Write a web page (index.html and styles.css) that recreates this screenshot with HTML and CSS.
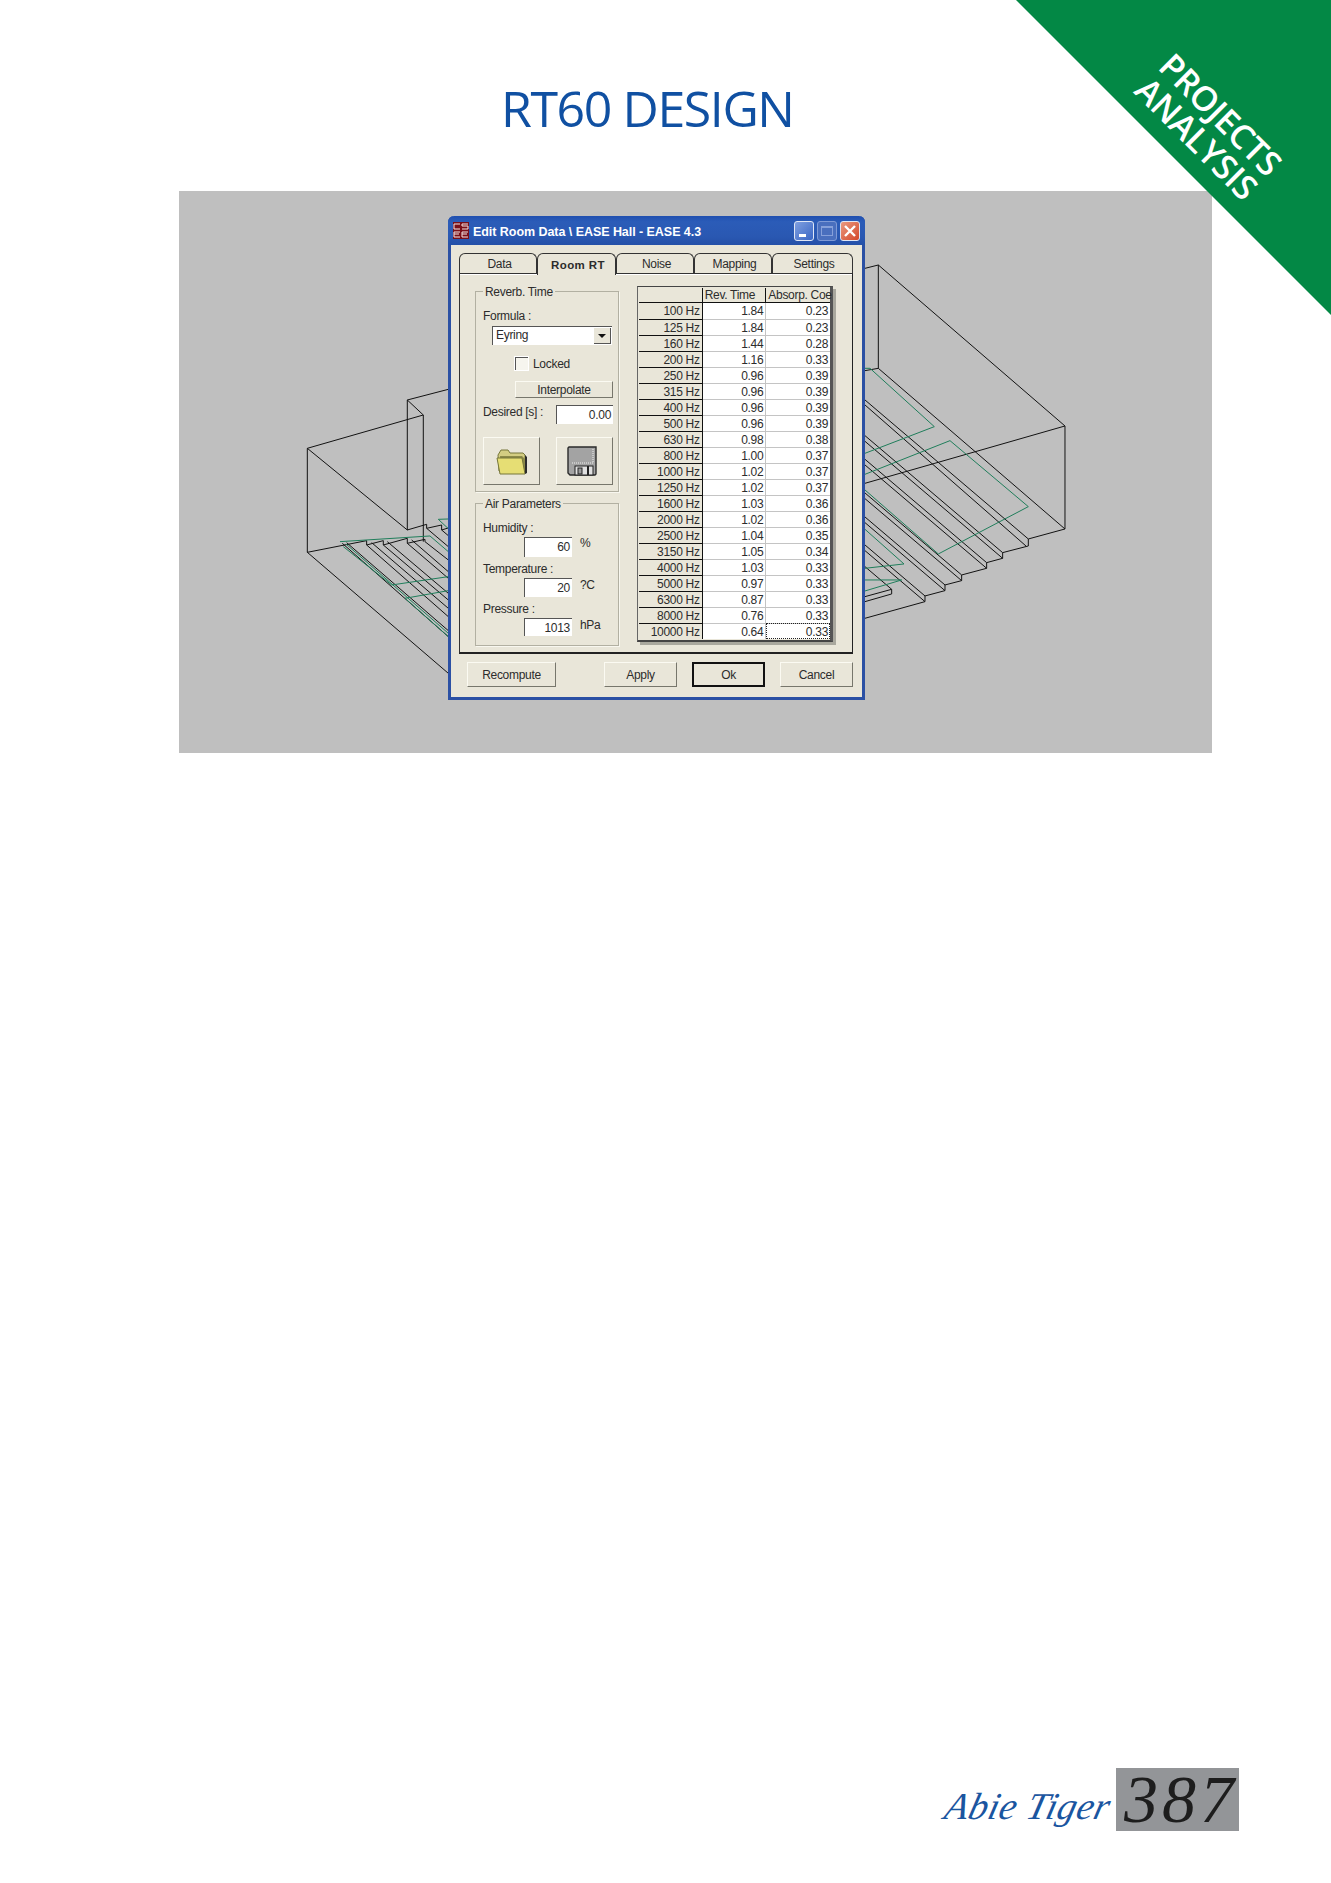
FILE: index.html
```html
<!DOCTYPE html>
<html lang="en">
<head>
  <meta charset="UTF-8" />
  <title>RT60 Design</title>
  <link rel="stylesheet" href="styles.css">
</head>
<body>
  <div class="page">
    <div class="corner">
      <div class="corner-text">PROJECTS<br>ANALYSIS</div>
    </div>

    <h1 class="title">RT60 DESIGN</h1>

    <div class="figure">
      <!-- wireframe of the hall, drawn in page coordinates -->
      <svg class="wire" viewBox="179 191 1033 562" width="1033" height="562">
        <!-- left side, points read at 3x from (170,370) -->
        <g transform="translate(170 370) scale(0.3333)">
          <path class="blk" d="M412 235V547M412 235L760 135V515M712 90L835 58M712 90V480M712 90L760 135M412 235L712 480M412 547L835 910M412 547L590 512V525L640 512V525L712 505V520L765 508V515M712 480L770 463V475L815 465V480L835 474"/>
          <path class="blk" d="M517 520L835 800M530 518L835 782M590 525L835 740M605 518L835 715M640 525L835 690M652 515L835 670M712 520L835 625M725 510L835 605M765 515L835 570M770 475L835 530M815 480L835 497"/>
          <path class="grn" d="M510 515L780 498L835 545M520 530L665 645L835 620M528 522L835 790M705 685L835 662M705 685L835 800M805 448L835 447M805 448L835 476"/>
        </g>
        <!-- right side, points read at 3x from (850,240) -->
        <g transform="translate(850 240) scale(0.3333)">
          <path class="blk" d="M45 85L85 75L645 558V867L85 385V75M45 392L85 385M45 730L645 558M645 867L535 897V918L458 938V955L410 968V985L335 1005V1022L285 1035V1052L225 1068V1085L45 1135"/>
          <path class="blk" d="M535 897L45 480M528 918L45 495M458 938L45 587M458 955L45 604M410 968L45 658M410 985L45 675M335 1005L45 759M335 1022L45 776M285 1035L45 831M285 1052L45 848M225 1068L45 915M225 1085L45 932M125 1048L45 980M125 1048L45 1070M125 1062L45 1085M125 1048V1062"/>
          <path class="grn" d="M45 385H60L253 560L45 640M300 602L45 703M300 602L535 800L265 942L45 750M45 868L162 972L45 985M155 1020H45M155 1020L45 1053"/>
        </g>
      </svg>

      <div class="dialog">
        <div class="titlebar">
          <svg class="app-icon" viewBox="0 0 16 17" width="16" height="17">
            <rect width="16" height="17" fill="#7a1019"/>
            <path d="M1 2H7M1 2V7M1 7H7M9 2H15M9 2V4H15V7H9M1 10V15M1 10H7M1 12H6M1 15H7M9 10H15M9 10V15M9 12H14M9 15H15" stroke="#f3e6e6" stroke-width="1" fill="none"/>
          </svg>
          <span class="titlebar-text">Edit Room Data \ EASE Hall - EASE 4.3</span>
          <div class="win-buttons">
            <span class="win-btn win-min"><i></i></span>
            <span class="win-btn win-max"><i></i></span>
            <span class="win-btn win-close">
              <svg viewBox="0 0 20 20" width="20" height="20"><path d="M5 5L15 15M15 5L5 15" stroke="#fff" stroke-width="2.4"/></svg>
            </span>
          </div>
        </div>

        <div class="dialog-body">
          <div class="tabs">
            <div class="tab">Data</div>
            <div class="tab tab-active">Room RT</div>
            <div class="tab">Noise</div>
            <div class="tab">Mapping</div>
            <div class="tab">Settings</div>
          </div>

          <div class="panel">
            <div class="left-col">
              <!-- Reverb. Time -->
              <div class="group group-reverb">
                <div class="group-title">Reverb. Time</div>
                <div class="lbl">Formula :</div>
                <div class="select">
                  <span>Eyring</span>
                  <span class="select-arrow"></span>
                </div>
                <div class="check-row">
                  <span class="check"></span>
                  <span class="lbl">Locked</span>
                </div>
                <div class="btn btn-interp">Interpolate</div>
                <div class="desired-row">
                  <span class="lbl">Desired [s] :</span>
                  <span class="input input-desired">0.00</span>
                </div>
                <div class="icon-row">
                  <div class="btn icon-btn">
                    <svg viewBox="0 0 32 28" width="32" height="28">
                      <path d="M3 24L2 8L5 3H12L14 6H27L29 8V24Z" fill="#d3cd82" stroke="#77773a" stroke-width="1"/>
                      <path d="M4 9H26L29 12V26H5Z" fill="#8c8a48"/>
                      <path d="M1 11H26L29 27H4Z" fill="#e6de74" stroke="#77773a" stroke-width="1"/>
                      <path d="M29 8L31 10V26L29 27Z" fill="#2b2b2b"/>
                    </svg>
                  </div>
                  <div class="btn icon-btn icon-btn-save">
                    <svg viewBox="0 0 30 30" width="30" height="30">
                      <path d="M2 1H29V28L28 29H3L1 27V2Z" fill="#a3a3a3" stroke="#2a2a2a" stroke-width="1.4"/>
                      <path d="M26 3V17H5" fill="none" stroke="#efefef" stroke-width="1" stroke-dasharray="1 1"/>
                      <rect x="8" y="20" width="18" height="9" fill="#e0e0e0" stroke="#222"/>
                      <rect x="11" y="22" width="4" height="6" fill="#9a9a9a" stroke="#222"/>
                      <rect x="20" y="20" width="2" height="9" fill="#222"/>
                    </svg>
                  </div>
                </div>
              </div>

              <!-- Air Parameters -->
              <div class="group group-air">
                <div class="group-title">Air Parameters</div>
                <div class="lbl">Humidity :</div>
                <div class="air-row air-row-hum">
                  <span class="input">60</span><span class="lbl unit unit-up">%</span>
                </div>
                <div class="lbl air-lbl">Temperature :</div>
                <div class="air-row air-row-temp">
                  <span class="input">20</span><span class="lbl unit">?C</span>
                </div>
                <div class="lbl air-lbl">Pressure :</div>
                <div class="air-row air-row-pres">
                  <span class="input">1013</span><span class="lbl unit">hPa</span>
                </div>
              </div>
            </div>

            <div class="grid-wrap">
              <table class="grid">
                <tr class="grid-head"><th></th><th class="col-l">Rev. Time</th><th class="col-l">Absorp. Coe</th></tr>
                <tr><th>100 Hz</th><td>1.84</td><td>0.23</td></tr>
                <tr><th>125 Hz</th><td>1.84</td><td>0.23</td></tr>
                <tr><th>160 Hz</th><td>1.44</td><td>0.28</td></tr>
                <tr><th>200 Hz</th><td>1.16</td><td>0.33</td></tr>
                <tr><th>250 Hz</th><td>0.96</td><td>0.39</td></tr>
                <tr><th>315 Hz</th><td>0.96</td><td>0.39</td></tr>
                <tr><th>400 Hz</th><td>0.96</td><td>0.39</td></tr>
                <tr><th>500 Hz</th><td>0.96</td><td>0.39</td></tr>
                <tr><th>630 Hz</th><td>0.98</td><td>0.38</td></tr>
                <tr><th>800 Hz</th><td>1.00</td><td>0.37</td></tr>
                <tr><th>1000 Hz</th><td>1.02</td><td>0.37</td></tr>
                <tr><th>1250 Hz</th><td>1.02</td><td>0.37</td></tr>
                <tr><th>1600 Hz</th><td>1.03</td><td>0.36</td></tr>
                <tr><th>2000 Hz</th><td>1.02</td><td>0.36</td></tr>
                <tr><th>2500 Hz</th><td>1.04</td><td>0.35</td></tr>
                <tr><th>3150 Hz</th><td>1.05</td><td>0.34</td></tr>
                <tr><th>4000 Hz</th><td>1.03</td><td>0.33</td></tr>
                <tr><th>5000 Hz</th><td>0.97</td><td>0.33</td></tr>
                <tr><th>6300 Hz</th><td>0.87</td><td>0.33</td></tr>
                <tr><th>8000 Hz</th><td>0.76</td><td>0.33</td></tr>
                <tr><th>10000 Hz</th><td>0.64</td><td class="cell-focus">0.33</td></tr>
              </table>
            </div>
          </div>

          <div class="actions">
            <div class="btn btn-recompute">Recompute</div>
            <div class="btn btn-action">Apply</div>
            <div class="btn btn-action btn-default">Ok</div>
            <div class="btn btn-action">Cancel</div>
          </div>
        </div>
      </div>
    </div>

    <div class="footer">
      <span class="signature">Abie Tiger</span>
      <span class="page-num">387</span>
    </div>
  </div>
</body>
</html>
```

FILE: styles.css
```css
* {
  box-sizing: border-box;
}
body {
  margin: 0;
  background: white;
  font-family: "Liberation Sans", Arial, sans-serif;
}
.page {
  position: relative;
  width: 1331px;
  height: 1883px;
  display: flex;
  flex-direction: column;
  overflow: hidden;
}

/* green corner */
.corner {
  position: absolute;
  top: 0;
  right: 0;
  width: 315px;
  height: 315px;
  background: #038845;
  clip-path: polygon(0 0, 100% 0, 100% 100%);
  z-index: 2;
}
.corner-text {
  position: absolute;
  left: 193px;
  top: 126px;
  transform: translate(-50%, -50%) rotate(45deg);
  color: white;
  font-family: "Open Sans", sans-serif;
  font-weight: 600;
  font-size: 34px;
  line-height: 34px;
  letter-spacing: -0.3px;
  text-align: center;
  white-space: nowrap;
}

/* heading */
.title {
  margin: 0;
  height: 191px;
  padding: 75px 0 0 501px;
  font-family: "Open Sans", sans-serif;
  font-weight: 400;
  font-size: 50px;
  line-height: 66px;
  letter-spacing: -1.4px;
  color: #1050a2;
  white-space: nowrap;
}

/* grey figure */
.figure {
  position: relative;
  width: 1033px;
  height: 562px;
  margin-left: 179px;
  background: #bfbfbf;
}
.wire {
  display: block;
}
.blk {
  fill: none;
  stroke: #111;
  stroke-width: 3;
}
.grn {
  fill: none;
  stroke: #1f7d5a;
  stroke-width: 3;
}

/* dialog window */
.dialog {
  position: absolute;
  left: 269px;
  top: 25px;
  width: 417px;
  height: 484px;
  background: #e9e6d9;
  border: 3px solid #2b50a4;
  border-top: 0;
  border-radius: 6px 6px 0 0;
  font-family: "Liberation Sans", sans-serif;
  font-size: 12px;
  letter-spacing: -0.3px;
  color: #2c2c2c;
}
.titlebar {
  display: flex;
  align-items: center;
  height: 29px;
  margin: 0 -3px;
  padding: 0 5px;
  border-radius: 6px 6px 0 0;
  background: linear-gradient(#1f4fb0, #2b5cb8 20%, #2a58b2 70%, #2450a8);
  color: white;
}
.app-icon {
  flex: none;
}
.titlebar-text {
  margin: 2px 0 0 4px;
  font-weight: bold;
  font-size: 12.5px;
  letter-spacing: -0.05px;
  white-space: nowrap;
}
.win-buttons {
  display: flex;
  gap: 3px;
  margin-left: auto;
}
.win-btn {
  display: flex;
  width: 20px;
  height: 20px;
  border: 1px solid #dfe6f5;
  border-radius: 3px;
}
.win-min {
  background: linear-gradient(135deg, #7f9fe0, #3a66c4);
}
.win-min i {
  width: 7px;
  height: 3px;
  margin: 12px 0 0 4px;
  background: white;
}
.win-max {
  background: #4a6fbe;
  border-color: #7f9ad6;
}
.win-max i {
  width: 12px;
  height: 10px;
  margin: 4px 0 0 3px;
  border: 1px solid #86a0da;
  border-top-width: 2px;
}
.win-close {
  background: linear-gradient(135deg, #ea9a80, #d4472a);
}
.win-close svg {
  margin: -1px;
}

.dialog-body {
  padding: 8px 9px 0 8px;
}

/* tabs */
.tabs {
  display: grid;
  grid-template-columns: 78px 79px 78px 78px 81px;
  height: 20px;
  position: relative;
  z-index: 1;
}
.tab {
  height: 20px;
  padding-left: 3px;
  border: 1px solid #333;
  border-bottom: 0;
  border-radius: 6px 6px 0 0;
  text-align: center;
  line-height: 21px;
  background: #e9e6d9;
}
.tab-active {
  height: 22px;
  font-weight: bold;
  font-size: 11.5px;
  letter-spacing: 0.4px;
  line-height: 23px;
}

/* main panel */
.panel {
  display: flex;
  align-items: flex-start;
  gap: 18px;
  height: 381px;
  padding: 12px 0 0 15px;
  border: 1px solid #333;
  border-right-color: #222;
  border-bottom: 2px solid #222;
  box-shadow: inset 0 1px 0 #fff;
}
.left-col {
  width: 144px;
  margin-top: 5px;
}
.group {
  position: relative;
  border: 1px solid #b2b0a2;
  padding-left: 7px;
  box-shadow: 1px 1px 0 #f8f7ef;
}
.group-title {
  position: absolute;
  left: 7px;
  top: -7px;
  height: 14px;
  padding: 0 2px;
  line-height: 14px;
  background: #e9e6d9;
}
.group-reverb {
  height: 201px;
  padding-top: 17px;
}
.group-air {
  height: 143px;
  margin-top: 11px;
  padding-top: 17px;
}
.lbl {
  height: 14px;
  line-height: 14px;
}

/* inputs */
.select {
  display: flex;
  justify-content: space-between;
  width: 120px;
  height: 19px;
  margin: 3px 0 0 9px;
  padding: 1px 1px 0 3px;
  background: white;
  border-left: 1px solid #555;
  border-top: 1px solid #555;
  line-height: 15px;
}
.select-arrow {
  position: relative;
  width: 17px;
  height: 16px;
  background: #e9e6d9;
  border-right: 1px solid #555;
  border-bottom: 1px solid #555;
}
.select-arrow::after {
  content: "";
  position: absolute;
  left: 4px;
  top: 6px;
  border: 4px solid transparent;
  border-top: 4px solid #111;
  border-bottom: 0;
}
.check-row {
  display: flex;
  align-items: center;
  gap: 5px;
  height: 15px;
  margin: 11px 0 0 32px;
}
.check {
  width: 13px;
  height: 13px;
  background: #f6f5ee;
  border-left: 1px solid #555;
  border-top: 1px solid #555;
  outline: 1px solid #fff;
}
.btn {
  display: flex;
  align-items: center;
  justify-content: center;
  background: #e9e6d9;
  border: 1px solid;
  border-color: #fbfaf2 #77766c #77766c #fbfaf2;
}
.btn-interp {
  width: 98px;
  height: 17px;
  margin: 10px 0 0 32px;
}
.desired-row {
  display: flex;
  justify-content: space-between;
  width: 130px;
  height: 19px;
  margin-top: 7px;
}
.input {
  display: block;
  width: 48px;
  height: 100%;
  padding: 2px 2px 0 0;
  background: white;
  border-left: 1px solid #555;
  border-top: 1px solid #555;
  text-align: right;
  line-height: 15px;
}
.input-desired {
  width: 57px;
}
.icon-row {
  display: flex;
  justify-content: space-between;
  width: 130px;
  margin-top: 13px;
}
.icon-btn {
  width: 57px;
  height: 48px;
}
.icon-btn-save {
  padding-right: 5px;
}
.air-row {
  display: flex;
  margin: 2px 0 0 41px;
}
.air-row-hum {
  height: 20px;
}
.air-row-temp {
  height: 19px;
}
.air-row-pres {
  height: 18px;
}
.air-lbl {
  margin-top: 5px;
}
.unit {
  margin: 0 0 0 8px;
}
.unit-up {
  margin-top: -1px;
}

/* frequency table */
.grid-wrap {
  width: 196px;
  height: 356px;
  padding: 1px 0 0 1px;
  background: #e9e6d9;
  border-top: 1px solid #444;
  border-left: 1px solid #666;
  border-right: 3px solid #555;
  border-bottom: 2px solid #444;
  box-shadow: 3px 3px 0 #a9a89e;
}
.grid {
  width: 191px;
  table-layout: fixed;
  border-collapse: separate;
  border-spacing: 0;
}
.grid th,
.grid td {
  height: 16px;
  padding: 0 2px 0 0;
  font-weight: normal;
  text-align: right;
  line-height: 14px;
}
.grid th {
  width: 63px;
  border-top: 1px solid #111;
  border-right: 1px solid #111;
}
.grid td {
  background: white;
  border-top: 1px solid #c4c4c4;
  border-right: 1px solid #c4c4c4;
}
.grid td:last-child {
  border-right: 0;
}
.grid .grid-head th {
  height: 14px;
  border-top: 0;
  border-bottom: 1px solid #111;
}
.grid .grid-head + tr th,
.grid .grid-head + tr td {
  border-top: 0;
}
.grid .grid-head th:last-child {
  border-right: 0;
}
.grid .col-l {
  width: 63px;
  text-align: left;
  padding-left: 2px;
  white-space: nowrap;
}
.grid .cell-focus {
  outline: 1px dotted #222;
  outline-offset: -1px;
}

/* bottom buttons */
.actions {
  display: flex;
  height: 25px;
  margin-top: 8px;
  padding-left: 8px;
}
.btn-recompute {
  width: 89px;
  margin-right: 48px;
}
.btn-action {
  width: 73px;
  margin-right: 15px;
}
.btn-action:last-child {
  margin-right: 0;
}
.btn-default {
  border: 2px solid #111;
}

/* footer */
.footer {
  display: flex;
  align-items: stretch;
  justify-content: flex-end;
  margin-top: auto;
  margin-bottom: 52px;
  margin-right: 92px;
  height: 63px;
}
.signature {
  align-self: flex-end;
  margin-right: 6px;
  font-family: "Liberation Serif", serif;
  font-style: italic;
  font-size: 38px;
  line-height: 50px;
  letter-spacing: 0.5px;
  color: #1a55a0;
  white-space: nowrap;
  transform: skewX(-14deg);
}
.page-num {
  width: 123px;
  padding-left: 8px;
  background: #939598;
  font-family: "Liberation Serif", serif;
  font-style: italic;
  font-size: 68px;
  line-height: 62px;
  letter-spacing: 4px;
  color: #1d1d1d;
}
```
